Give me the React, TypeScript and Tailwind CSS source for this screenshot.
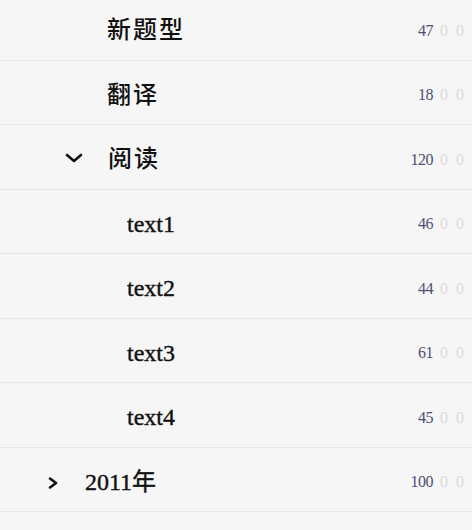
import React from 'react'

type Row = { label: string; count: number; indent: number; chevron?: 'down' | 'right'; cjk?: boolean }

const rows: Row[] = [
  { label: '新题型', count: 47, indent: 107, cjk: true },
  { label: '翻译', count: 18, indent: 107, cjk: true },
  { label: '阅读', count: 120, indent: 108, chevron: 'down', cjk: true },
  { label: 'text1', count: 46, indent: 127 },
  { label: 'text2', count: 44, indent: 127 },
  { label: 'text3', count: 61, indent: 127 },
  { label: 'text4', count: 45, indent: 127 },
  { label: '2011年', count: 100, indent: 85, chevron: 'right' },
  { label: '', count: -1, indent: 0 },
]

function ChevronDown() {
  return (
    <svg width="18" height="10" viewBox="0 0 18 10" className="absolute left-[-43px] top-[8px]">
      <polyline points="2,2 9,8 16,2" fill="none" stroke="#111" strokeWidth="2.6" strokeLinecap="round" strokeLinejoin="round" />
    </svg>
  )
}

function ChevronRight() {
  return (
    <svg width="11" height="12" viewBox="0 0 11 12" className="absolute left-[-37px] top-[9px]">
      <polyline points="2,1.5 8,6 2,10.5" fill="none" stroke="#111" strokeWidth="2.6" strokeLinecap="round" strokeLinejoin="round" />
    </svg>
  )
}

function TreeRow({ row }: { row: Row }) {
  return (
    <div className="flex h-[64.5px] items-center border-b-[1.5px] border-[#e6e6e6] pt-[6px]">
      <div style={{ paddingLeft: row.indent }} className="flex-1">
        {row.label && (
          <span
            className={`relative inline-block text-[24px] leading-[28px] text-[#111] ${row.cjk ? 'tracking-[2px] font-medium' : 'font-normal [-webkit-text-stroke:0.4px_#111]'}`}
          >
            {row.chevron === 'down' && <ChevronDown />}
            {row.chevron === 'right' && <ChevronRight />}
            {row.label}
          </span>
        )}
      </div>
      {row.count >= 0 && (
        <>
          <span className="text-[16px] leading-[20px] text-[#4f4f74] tracking-[-0.5px]">{row.count}</span>
          <span className="ml-[7px] flex w-[32px] shrink-0 gap-[8px] whitespace-nowrap text-[16px] leading-[20px] text-[#dadada]">
            <span>0</span>
            <span>0</span>
          </span>
        </>
      )}
    </div>
  )
}

export default function App() {
  return (
    <div className="h-[530px] w-[472px] overflow-hidden bg-[#f6f6f6]" style={{ fontFamily: '"Liberation Serif", "Noto Sans CJK SC", serif' }}>
      <div className="-mt-[4px]">
        {rows.map((r, i) => (
          <TreeRow key={i} row={r} />
        ))}
      </div>
    </div>
  )
}
